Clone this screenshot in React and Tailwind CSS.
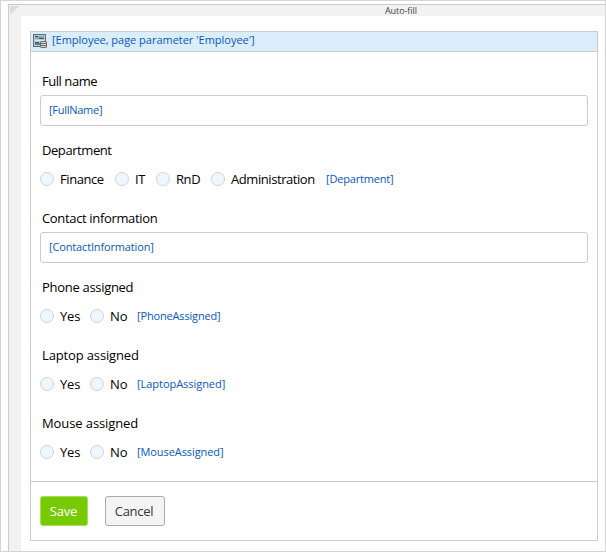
function Binding({ children, className = "" }) {
  return <span className={`whitespace-nowrap text-[11px] leading-5 text-[#0857bd] ${className}`}>{children}</span>;
}

function Label({ children, className = "" }) {
  return <div className={`ml-px h-5 pl-px text-[13px] leading-[18px] whitespace-nowrap text-black ${className}`}>{children}</div>;
}

function TextField({ label, binding, labelClass, bindingClass }) {
  return (
    <div>
      <Label className={labelClass}>{label}</Label>
      <div className="mt-[3px] flex h-[31px] items-center rounded-[3px] border border-[#cbcbcd] bg-white pb-0.5 pl-2">
        <Binding className={bindingClass}>{binding}</Binding>
      </div>
    </div>
  );
}

function Option({ text, width, textClass = "" }) {
  return (
    <label className={`flex shrink-0 items-center ${width}`}>
      <span className="size-3.5 shrink-0 rounded-full border border-[#cfd5da] bg-[#eef6fe]" />
      <span className={`ml-1.5 text-[13px] leading-5 whitespace-nowrap text-black ${textClass}`}>{text}</span>
    </label>
  );
}

function RadioGroup({ label, options, binding, labelClass, bindingClass }) {
  return (
    <div className="pb-[5px]">
      <Label className={labelClass}>{label}</Label>
      <div className="mt-2 flex h-5 items-center">
        {options.map((o) => (
          <Option key={o.text} {...o} />
        ))}
        <Binding className={bindingClass}>{binding}</Binding>
      </div>
    </div>
  );
}

const yesNo = [
  { text: "Yes", width: "w-[50px]", textClass: "tracking-[-0.2px]" },
  { text: "No", width: "w-[47px]" },
];

const departments = [
  { text: "Finance", width: "w-[75px]", textClass: "tracking-[-0.43px]" },
  { text: "IT", width: "w-[41px]", textClass: "tracking-[-0.4px]" },
  { text: "RnD", width: "w-[55px]", textClass: "tracking-[-0.4px]" },
  { text: "Administration", width: "w-[108px]", textClass: "tracking-[-0.43px]" },
];

function DataViewIcon() {
  return (
    <svg className="mt-0.5 ml-0.5 shrink-0" width="14" height="14" viewBox="0 0 14 14" fill="none">
      <rect x="0.5" y="0.5" width="12" height="12" fill="#c3c9cd" stroke="#66686b" />
      <rect x="2" y="2" width="9" height="3" fill="#63b4dd" />
      <path d="M2 2.500h3M6 4.500h5M2 8.500h4" stroke="#474f55" />
      <path d="M2 6h9v1H2z" fill="#e2e6e9" />
      <rect x="2" y="9" width="5" height="2" fill="#3e86ad" />
      <path d="M7 8c0-1.300 7-1.300 7 0v5c0 1.300-7 1.300-7 0z" fill="#6b6b6b" />
      <path d="M8 8.500h5M8 10.500h5M8 12.500h5" stroke="#d6d6d6" />
    </svg>
  );
}

export default function App() {
  return (
    <div className="h-[552px] w-[606px] overflow-hidden border border-[#d5d5d5] bg-white pt-[3px] pl-[7px] font-['Open_Sans','Noto_Sans',sans-serif]">
      <div className="flex h-[547px] flex-col border-t border-l border-[#cbcbcd] bg-[#f2f2f2]">
        <div className="flex h-[11px] shrink-0">
          <svg className="mt-px ml-px shrink-0" width="9" height="9" viewBox="0 0 9 9">
            <path d="M0 0h9L0 9z" fill="#dcdcdc" />
          </svg>
          <div className="flex-1 pl-[366px] text-[9px] leading-[12px] tracking-[-0.08px] text-[#444]">Auto-fill</div>
        </div>
        <div className="ml-3 flex-1 bg-white pt-[15px] pr-[7px] pl-[9px]">
          <div className="flex h-[510px] flex-col border border-[#cbcbcf]">
            <div className="flex h-[20px] shrink-0 items-start border-b border-[#cbcbcf] bg-[#daedfb]">
              <DataViewIcon />
              <Binding className="-mt-[2px] ml-[5px] tracking-[-0.02px]">[Employee, page parameter 'Employee']</Binding>
            </div>
            <div className="flex flex-1 flex-col gap-[15px] px-[9px] pt-5">
              <TextField label="Full name" binding="[FullName]" labelClass="tracking-[-0.45px]" bindingClass="tracking-[-0.27px]" />
              <RadioGroup
                label="Department"
                options={departments}
                binding="[Department]"
                labelClass="tracking-[-0.43px]"
                bindingClass="ml-[7px] tracking-[-0.18px]"
              />
              <TextField
                label="Contact information"
                binding="[ContactInformation]"
                labelClass="tracking-[-0.34px]"
                bindingClass="tracking-[-0.15px]"
              />
              <RadioGroup
                label="Phone assigned"
                options={yesNo}
                binding="[PhoneAssigned]"
                labelClass="tracking-[-0.3px]"
                bindingClass="tracking-[-0.16px]"
              />
              <RadioGroup
                label="Laptop assigned"
                options={yesNo}
                binding="[LaptopAssigned]"
                labelClass="tracking-[-0.14px]"
                bindingClass="tracking-[-0.04px]"
              />
              <RadioGroup
                label="Mouse assigned"
                options={yesNo}
                binding="[MouseAssigned]"
                labelClass="tracking-[-0.1px]"
                bindingClass="tracking-[-0.08px]"
              />
            </div>
            <div className="flex h-[59px] shrink-0 gap-[17px] border-t border-[#cbcbcf] pt-3.5 pl-[9px]">
              <button className="h-[30px] w-12 rounded-[3px] border border-[#a5de58] bg-[#76ca02] pr-px text-[13px] leading-5 tracking-[-0.15px] text-white">
                Save
              </button>
              <button className="h-[30px] w-[60px] rounded-[3px] border border-[#aaa] bg-[#f4f4f4] pr-0.5 text-[13px] leading-5 tracking-[-0.3px] text-[#333]">
                Cancel
              </button>
            </div>
          </div>
        </div>
      </div>
    </div>
  );
}
